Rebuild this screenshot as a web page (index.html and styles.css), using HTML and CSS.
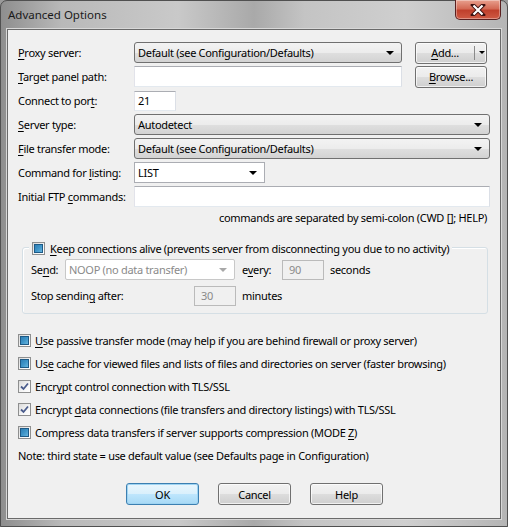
FILE: index.html
```html
<!DOCTYPE html>
<html>
<head>
<meta charset="utf-8">
<link rel="stylesheet" href="styles.css">
</head>
<body>
<div class="window">
  <div class="titlebar">
    <span class="title">Advanced Options</span>
    <div class="close">
      <svg width="16" height="12" viewBox="0 0 16 12"><path d="M3 1 L13 11 M13 1 L3 11" stroke="#3a1010" stroke-width="4" stroke-linecap="square"/><path d="M3.5 1.5 L12.5 10.5 M12.5 1.5 L3.5 10.5" stroke="#fff" stroke-width="2.2"/></svg>
    </div>
  </div>
  <div class="client">
    <div class="form">
      <div class="row">
        <span class="lbl"><u>P</u>roxy server:</span>
        <div class="combo w-mid"><span class="val">Default (see Configuration/Defaults)</span><span class="arrow"></span></div>
        <div class="btn split"><span class="split-main"><u>A</u>dd...</span><span class="split-sep"></span><span class="split-arrow"></span></div>
      </div>
      <div class="row">
        <span class="lbl"><u>T</u>arget panel path:</span>
        <div class="edit w-mid"></div>
        <div class="btn side"><u>B</u>rowse...</div>
      </div>
      <div class="row">
        <span class="lbl">Connect to por<u>t</u>:</span>
        <div class="edit w-port">21</div>
      </div>
      <div class="row">
        <span class="lbl"><u>S</u>erver type:</span>
        <div class="combo w-full"><span class="val">Autodetect</span><span class="arrow"></span></div>
      </div>
      <div class="row">
        <span class="lbl"><u>F</u>ile transfer mode:</span>
        <div class="combo w-full"><span class="val">Default (see Configuration/Defaults)</span><span class="arrow"></span></div>
      </div>
      <div class="row">
        <span class="lbl">Command for <u>l</u>isting:</span>
        <div class="combo editable w-cmd"><span class="val">LIST</span><span class="arrow"></span></div>
      </div>
      <div class="row">
        <span class="lbl">Initial FTP <u>c</u>ommands:</span>
        <div class="edit w-full"></div>
      </div>
      <div class="hint">commands are separated by semi-colon (CWD []; HELP)</div>

      <div class="group">
        <div class="group-head"><span class="cb ind"></span><span><u>K</u>eep connections alive (prevents server from disconnecting you due to no activity)</span></div>
        <div class="grow">
          <span class="glbl">Se<u>n</u>d:</span>
          <div class="combo disabled w-send"><span class="val">NOOP (no data transfer)</span><span class="arrow"></span></div>
          <span class="glbl every">e<u>v</u>ery:</span>
          <div class="edit disabled w-small">90</div>
          <span class="glbl unit">seconds</span>
        </div>
        <div class="grow">
          <span class="glbl stop">Stop sendin<u>g</u> after:</span>
          <div class="edit disabled w-small">30</div>
          <span class="glbl unit">minutes</span>
        </div>
      </div>

      <div class="checks">
        <div class="check"><span class="cb ind"></span><span><u>U</u>se passive transfer mode (may help if you are behind firewall or proxy server)</span></div>
        <div class="check"><span class="cb ind"></span><span>Us<u>e</u> cache for viewed files and lists of files and directories on server (faster browsing)</span></div>
        <div class="check"><span class="cb on"><svg width="9" height="9" viewBox="0 0 9 9"><path d="M1 4.5 L3.5 7 L8 1.5" fill="none" stroke="#4a5c8c" stroke-width="1.8"/></svg></span><span>Encr<u>y</u>pt control connection with TLS/SSL</span></div>
        <div class="check"><span class="cb on"><svg width="9" height="9" viewBox="0 0 9 9"><path d="M1 4.5 L3.5 7 L8 1.5" fill="none" stroke="#4a5c8c" stroke-width="1.8"/></svg></span><span>Encrypt <u>d</u>ata connections (file transfers and directory listings) with TLS/SSL</span></div>
        <div class="check"><span class="cb ind"></span><span>Compress data transfers if server supports compression (MODE <u>Z</u>)</span></div>
        <div class="note">Note: third state = use default value (see Defaults page in Configuration)</div>
      </div>

      <div class="buttons">
        <div class="btn default">OK</div>
        <div class="btn">Cancel</div>
        <div class="btn">Help</div>
      </div>
    </div>
  </div>
</div>
</body>
</html>
```
FILE: styles.css
```css
* { box-sizing: border-box; }
html, body { margin: 0; padding: 0; }
body {
  width: 508px;
  height: 527px;
  overflow: hidden;
  font-family: "Noto Sans", sans-serif;
  font-size: 11px;
  letter-spacing: -0.3px;
  color: #000;
  background: #9a9a9a;
}
u { text-decoration: underline; text-underline-offset: 2px; }

.window {
  width: 508px;
  height: 527px;
  display: flex;
  flex-direction: column;
  padding: 0 6px 7px 6px;
  border: 1px solid #505050;
  border-radius: 7px 7px 0 0;
  background: linear-gradient(to right, #8e8e8e 0%, #b9b9b9 12%, #c9c9c9 35%, #a9a9a9 50%, #c4c4c4 60%, #cfcfcf 80%, #b5b5b5 100%);
}
.titlebar {
  height: 28px;
  display: flex;
  justify-content: space-between;
  align-items: flex-start;
  flex: none;
}
.title {
  margin-top: 6px;
  padding-left: 1px;
  font-size: 11.5px;
  letter-spacing: 0;
  color: #1a1a1a;
}
.close {
  width: 46px;
  height: 20px;
  margin-top: -1px;
  border: 1px solid #5a2020;
  border-top: none;
  border-radius: 0 0 5px 5px;
  background: linear-gradient(to bottom, #e8a08e 0%, #d46a55 45%, #c0402c 55%, #cf5a44 100%);
  box-shadow: inset 0 0 0 1px rgba(255,255,255,0.35);
  display: flex;
  align-items: center;
  justify-content: center;
}
.client {
  flex: 1;
  border: 1px solid #6a6a6a;
  background: #f0f0f0;
  box-shadow: 0 0 0 1px #d8d8d8;
}
.form {
  padding: 12px 0 0 10px;
  display: flex;
  flex-direction: column;
}
.row {
  display: flex;
  align-items: center;
  height: 21px;
  margin-bottom: 3px;
}
.lbl { width: 116px; flex: none; white-space: nowrap; }

.combo, .edit {
  height: 21px;
  display: flex;
  align-items: center;
  position: relative;
  flex: none;
  white-space: nowrap;
}
.combo {
  border: 1px solid #707070;
  border-radius: 3px;
  background: linear-gradient(to bottom, #f3f3f3 0%, #ececec 50%, #dfdfdf 51%, #d3d3d3 100%);
  padding: 0 20px 0 3px;
}
.combo .arrow {
  position: absolute;
  right: 7px;
  top: 8px;
  width: 0; height: 0;
  border-left: 4px solid transparent;
  border-right: 4px solid transparent;
  border-top: 4px solid #000;
}
.combo.editable {
  background: #fff;
  border: 1px solid #abadb3;
  border-radius: 0;
  padding-left: 3px;
}
.combo.disabled {
  background: #fff;
  border: 1px solid #c8c8c8;
  border-radius: 2px;
  color: #8a8a8a;
  padding-left: 3px;
}
.combo.disabled .arrow { border-top-color: #a8a8a8; }
.edit {
  background: #fff;
  border: 1px solid #abadb3;
  border-left-color: #e2e3ea;
  border-right-color: #dbdfe6;
  border-bottom-color: #e3e9ef;
  padding-left: 3px;
}
.edit.disabled {
  background: #f0f0f0;
  border-color: #bababa;
  color: #8a8a8a;
  padding-left: 6px;
}
.w-mid { width: 268px; }
.w-full { width: 356px; }
.w-port { width: 42px; height: 20px; }
.w-cmd { width: 131px; }
.w-send { width: 170px; }
.w-small { width: 42px; height: 20px; }

.btn {
  height: 22px;
  border: 1px solid #707070;
  border-radius: 3px;
  background: linear-gradient(to bottom, #f2f2f2 0%, #ebebeb 50%, #dddddd 51%, #cfcfcf 100%);
  box-shadow: inset 0 0 0 1px rgba(255,255,255,0.7);
  display: flex;
  align-items: center;
  justify-content: center;
  flex: none;
}
.btn.side { width: 72px; margin-left: 13px; }
.btn.split { width: 72px; margin-left: 13px; justify-content: flex-start; }
.split-main { width: 58px; text-align: center; }
.split-sep { width: 1px; height: 14px; background: #8a8a8a; }
.split-arrow {
  margin-left: 4px;
  width: 0; height: 0;
  border-left: 3px solid transparent;
  border-right: 3px solid transparent;
  border-top: 3px solid #000;
}

.hint {
  width: 469px;
  text-align: right;
  height: 16px;
  line-height: 16px;
  margin-top: 0;
}

.group {
  margin: 21px 0 0 4px;
  width: 466px;
  height: 67px;
  border: 1px solid #d5dfe5;
  border-radius: 3px;
  box-shadow: inset 1px 1px 0 #fff;
  position: relative;
  padding: 11px 0 0 8px;
}
.group-head {
  position: absolute;
  top: -8px;
  left: 6px;
  background: #f0f0f0;
  padding: 0 3px;
  display: flex;
  align-items: center;
  height: 16px;
  white-space: nowrap;
}
.group-head .cb { margin-right: 5px; }
.grow {
  display: flex;
  align-items: center;
  height: 21px;
  margin-bottom: 5px;
}
.glbl { white-space: nowrap; }
.grow .glbl:first-child { width: 34px; }
.grow .glbl.stop { width: 163px; }
.glbl.every { margin-left: 7px; width: 40px; }
.glbl.unit { margin-left: 6px; }

.cb {
  width: 13px;
  height: 13px;
  flex: none;
  border: 1px solid #8e8f8f;
  background: linear-gradient(135deg, #dadada 0%, #f6f6f6 60%, #ffffff 100%);
  display: flex;
  align-items: center;
  justify-content: center;
}
.cb.ind::after {
  content: "";
  width: 7px;
  height: 7px;
  border: 1px solid #1d5a86;
  background: linear-gradient(135deg, #2e7fb6 0%, #3f95c8 50%, #67b6df 100%);
}
.checks {
  margin-top: 15px;
  display: flex;
  flex-direction: column;
}
.check {
  display: flex;
  align-items: center;
  height: 23px;
  white-space: nowrap;
  margin-left: 0;
}
.check .cb { margin-right: 4px; }
.note { height: 23px; line-height: 23px; }

.buttons {
  display: flex;
  gap: 19px;
  margin: 16px 0 0 108px;
}
.buttons .btn { width: 73px; }
.btn.default {
  border-color: #3c7fb1;
  box-shadow: inset 0 0 0 1px #9fd4f2;
  background: linear-gradient(to bottom, #eaf6fd 0%, #d9f0fc 50%, #bee6fd 51%, #a7d9f5 100%);
}
```
